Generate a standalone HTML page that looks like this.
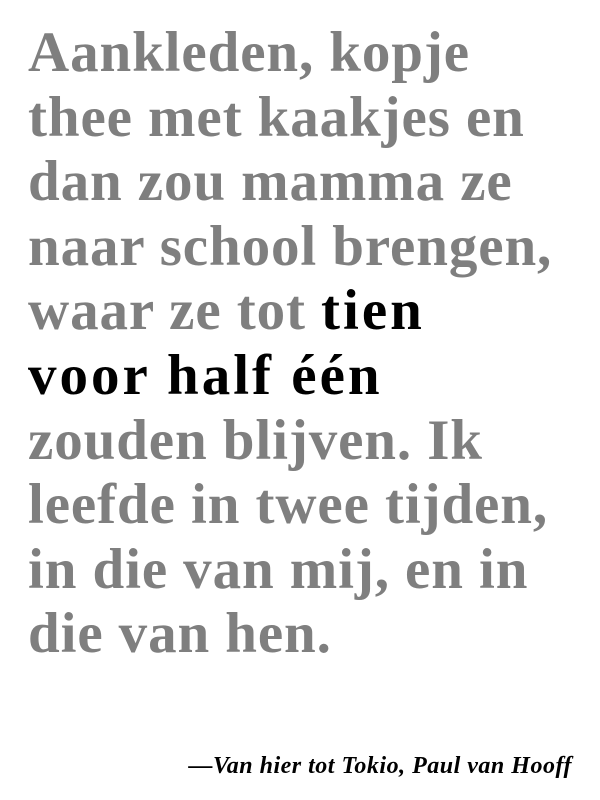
<!DOCTYPE html>
<html><head><meta charset="utf-8"><style>
html,body{margin:0;padding:0;background:#fff;width:600px;height:800px;overflow:hidden;}
.q{position:absolute;left:28px;top:21px;font-family:"Liberation Serif",serif;font-weight:bold;font-size:57px;line-height:64.6px;letter-spacing:0.9px;color:#7f7f7f;white-space:pre;}
.q b{color:#000;letter-spacing:3px;}
.a{position:absolute;right:28px;top:753px;font-family:"Liberation Serif",serif;font-weight:bold;font-style:italic;font-size:24px;letter-spacing:0.5px;color:#000;white-space:pre;}
</style></head><body>
<div class="q">Aankleden, kopje
thee met kaakjes en
dan zou mamma ze
naar school brengen,
waar ze tot <b>tien</b>
<b>voor half één</b>
zouden blijven. Ik
leefde in twee tijden,
in die van mij, en in
die van hen.</div>
<div class="a">—Van hier tot Tokio, Paul van Hooff</div>
</body></html>
